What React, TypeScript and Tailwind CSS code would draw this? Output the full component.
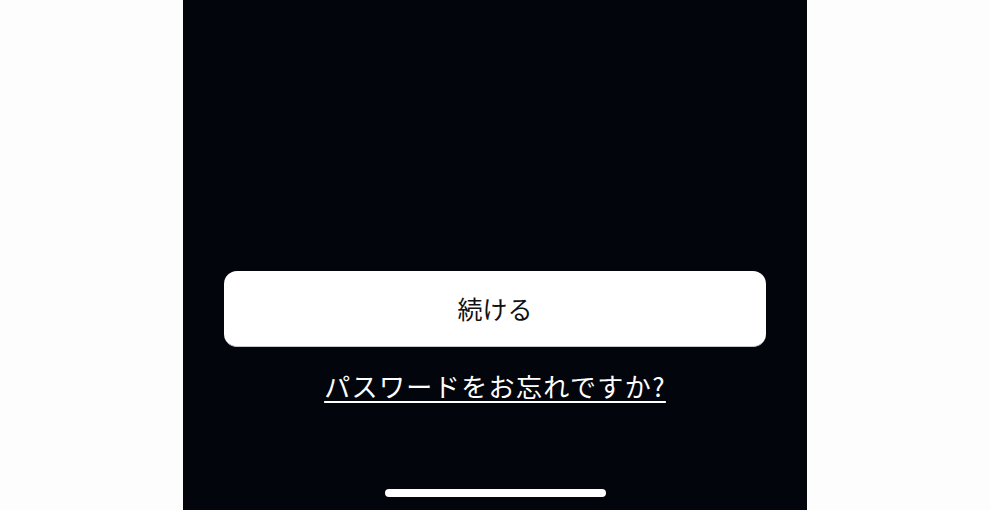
export default function App() {
  return (
    <div className="flex h-[510px] w-full justify-center bg-[#fdfdfd]">
      <div
        className="flex w-[624px] flex-col items-center bg-[#03050d] px-[41px] pt-[271px]"
        style={{ fontFamily: '"Noto Sans CJK JP", "Noto Sans", sans-serif' }}
      >
        <button className="flex h-[76px] w-full items-center justify-center rounded-[13px] border-b border-[#c8c8c8] bg-white text-[25px] leading-none text-[#111]">
          続ける
        </button>
        <a className="mt-[24px] text-[26px] leading-[30px] tracking-[1.4px] text-white underline decoration-[2px] underline-offset-[4px]">
          パスワードをお忘れですか?
        </a>
        <div className="flex-1" />
        <div className="mb-[13px] h-[8px] w-[221px] rounded-full bg-white" />
      </div>
    </div>
  );
}
